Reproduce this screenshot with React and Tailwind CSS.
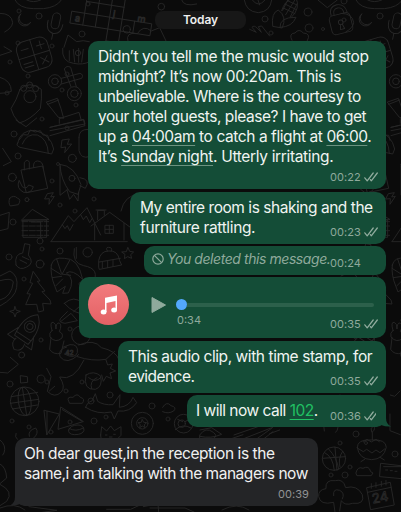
import React from "react";

/* Small line drawings of the chat wallpaper, on a grid three times finer than the page. */
function DoodleTop() {
  return (
    <g>
      <path d="M45 0Q58 25 100 26H130Q170 22 184 0M80 0q20 10 42 0" />
      <path d="M62 42a20 20 0 1 0 30 25a19 19 0 0 1-30-25Z" />
      <g transform="rotate(12 165 70)"><rect x="154" y="38" width="24" height="48" rx="12" /><path d="M143 65q-2 34 23 36q23-2 23-32M165 101v18" /></g>
      <g transform="rotate(9 230 50)">
        <path d="M214 36H456V72H214ZM252 -25V72M290 -25V72M328 -40V125M366 -40V125M404 36V72M252 0H366M328 108H366" />
        <text x="226" y="64">a</text><text x="336" y="34">j</text><text x="411" y="36">m</text>
      </g>
      <g transform="rotate(-17 103 165)"><rect x="55" y="117" width="96" height="94" rx="24" /><path d="M103 117v94M55 165h96M69 141h22M117 141h24M129 129v24M119 178l20 20M139 178l-20 20M65 183h28M65 194h28" /></g>
      <path d="M192 142L204 105L230 125Q250 119 268 125M188 145Q184 185 220 190Q250 196 268 185M208 152v30M220 148l4 38M236 145v42M250 148l-5 38" />
      <circle cx="234" cy="159" r="8" /><circle cx="165" cy="244" r="20" /><circle cx="165" cy="244" r="10" /><circle cx="223" cy="281" r="21" /><circle cx="223" cy="281" r="11" />
      <path d="M184 235L240 220Q252 224 245 235L184 252M213 260L193 207Q200 195 212 202L229 260" />
      <path d="M60 268Q50 300 33 326Q38 348 58 369Q90 360 121 326Q126 296 124 268Q88 240 60 268Z" /><ellipse cx="90" cy="290" rx="18" ry="18" /><circle cx="71" cy="265" r="9" /><circle cx="89" cy="255" r="9" /><circle cx="107" cy="266" r="9" />
      <path d="M140 306L172 295Q184 325 191 355L176 352ZM143 313L176 300M150 382L250 358L255 377L150 407M178 370v-14L237 337l7 24" />
      <path d="M0 232q34 10 34 42Q20 280 0 280M0 40q35 0 38 28Q36 84 14 96M12 140l24 14L0 166" />
      <path d="M384 125q-9-30 28-24q18-28 42-8l25-10l20 42M545 0q6 21 45 12" />
      <circle cx="380" cy="88" r="11" /><circle cx="484" cy="20" r="10" />
    </g>
  );
}

function DoodleMiddle() {
  return (
    <g>
      <path d="M53 69Q60 30 105 31Q153 44 161 87L155 102L60 82Q46 76 53 69ZM67 72Q80 39 112 45Q143 56 145 100M58 59l12-15l13 1l8-15l15 6l15-4l8 13l14 1l4 15" />
      <path d="M187 60L208 57L202 73L215 72L194 98L197 81L184 83ZM143 221L160 218L152 231L163 229L147 253L148 236L135 237Z" />
      <path d="M48 0L78 20L110-6M150 22L252-1L255 12L150 32" />
      <path d="M64 150L128 138L143 205L80 218ZM73 150V127q10-12 15 0V147M101 143q-3-20 12-20q16 0 17 22M57 182q-10 23 14 35q24 4 29-17l-14-5q-6 14-18 6Z" />
      <path d="M180 133Q224 137 243 194L234 223L209 215Q182 180 180 133ZM180 138v88l22-17M240 173q34 5 16 32l-16-8M201 210l8 28l12-15l13 20l2-25" /><circle cx="216" cy="175" r="9" />
      <path d="M29 235q12-12 24 0q12 3 2 19l-24 4q-7-9-2-23ZM65 300L97 268L146 298ZM70 300h70v52H70ZM94 306h28v46" /><path d="M66 305h80M66 318h80M66 332h80M66 346h80" strokeDasharray="18 4" />
      <path d="M153 365L205 287L222 305L261 263L302 345M187 314l8 12l7-9l7 15l10-18M242 284l8 15l9-11l10 20l7-12M153 365H382M273 318L329 277L391 322M284 313v47M372 310v50M293 299v-28h20v15M288 270h30M316 316h24v24h-24ZM328 316v24M316 328h24M363 273Q373 225 418 222" />
      <path d="M237 52Q236 28 264 28M237 52V92Q243 118 268 110M8 85L34 125L10 137M0 286L28 277L24 326L0 332" />
      <circle cx="81" cy="239" r="6" /><circle cx="37" cy="172" r="12" /><circle cx="217" cy="115" r="12" />
    </g>
  );
}

function DoodleLower() {
  return (
    <g>
      <path d="M48 75q-6-33 20-36l6-28l16 3l-5 31q20 25-5 36q-21 12-32-6M60 60l20 10M67 50l20 9" />
      <path d="M154 75q5-25 39-20q42-2 55 63Q217 86 199 99Q228 117 205 159L188 160L196 139L171 156L165 140Q150 105 154 75ZM170 57l14 42M209 61l-22 40M153 85l29 18M157 113l28-4M167 138l21-21M184 102l28 4" />
      <path d="M296 80V62Q301 33 326 33Q354 30 359 62L365 75L299 88ZM298 66L361 55M323 34q-8-11 2-12q14 0 9 11M307 65v19M323 62v21M339 59v21" />
      <path d="M100 95L120 123L112 124L135 153L126 155L150 180L153 192L128 190L131 212L115 216L110 193L77 194L91 162L81 161L98 130L91 128Z" />
      <path d="M182 245L213 220L232 242L195 250Q173 247 182 235L202 215M193 190q30-26 54 0l15 33q-39 1-69-33ZM221 215l27-24" />
      <g transform="rotate(34 83 270)"><path d="M83 215Q118 240 108 305H59Q49 240 83 215ZM57 275L40 314H65M109 275L126 313H104M68 310q-7 20 14 31q24-6 17-31M60 292h48" /><circle cx="83" cy="258" r="17" /><circle cx="83" cy="258" r="9" /></g>
      <path d="M45 200l4 11l12 3l-12 5l-4 12l-4-12l-12-5l12-3ZM384 23l5 11l12 2l-9 8l3 11l-12-5l-10 6l2-13l-10-7l13-1Z" />
      <path d="M156 271q-8-26 4-24q9 4 8 20q0-20 10-18q9 5 0 26q13 5 8 19q-19 17-36-3q-4-12 6-20ZM153 293l-4 35q10 17 34 12l9-37M188 322l22-8q26-2 22 24q-7 21-39 4M200 321q-27 7-20 29q20 27 56-6M236 315q47-20 68 8q45 10 53 36M232 350q45 15 86 8l26-24" /><circle cx="243" cy="286" r="28" /><text x="196" y="346" fontSize="20">42</text>
      <path d="M0 108l30-15q26 14 20 50Q46 173 0 198M0 122q35-10 40 4q-5 45-40 54M229 22L229 55M223 26q-8 44 28 51q53 9 26 56l13 20" />
      <circle cx="263" cy="37" r="14" /><circle cx="120" cy="72" r="12" /><circle cx="65" cy="345" r="9" />
    </g>
  );
}

function DoodleBottom() {
  return (
    <g>
      <circle cx="74" cy="124" r="43" /><ellipse cx="74" cy="124" rx="19" ry="43" transform="rotate(-8 74 124)" /><path d="M67 82l13 84M34 110l79-13M31 130l85-12M37 147l75-12" />
      <path d="M0 37l23 2L55 13L31-8M62 47l20 3l1 17l-20 2ZM140 25l13 25l-11 44q22 22 42 2q14-15-5-45q42 14 73-51M148 93l16-14M258 45q23-15 44 3q7 33-16 40q-38 3-28-43ZM266 53q20 17 36 0M275 86q-8-22 16-33" />
      <path d="M133 151l45 11l-37 62ZM141 154v68M182 142L174 208L249 185ZM187 149l58 34M206 210q5-15 28-15q18 0 18 16q-4 13-28 13q-21-1-18-14ZM207 205q20 12 43-1" />
      <path d="M206 124q-8-15 13-12q13-15 22 0q16 4 6 18h-37ZM257 142q5-16 19-19l10-22l7 23q18 12 46 10l21-30l-2 38q31-3 41-30l11 16Q389 158 354 153l-11 24l-9-21Q292 165 257 142ZM318 0l5 15l14-3l-6 13l16 8l-17 6l5 17l-16-7l-9 15l-5-19" />
      <circle cx="427" cy="190" r="33" /><circle cx="427" cy="190" r="17" /><path d="M427 179l4 8l9 1l-7 6l2 9l-8-5l-8 5l2-9l-7-6l9-1ZM302 225l3-25l15 13l12-15l11 14l20-12v26q-15 20-46 19q-16-4-15-20ZM316 225h5M341 223h5M328 231h8M321 247l-5 12" />
      <circle cx="551" cy="191" r="28" /><circle cx="545" cy="191" r="11" /><path d="M526 209q23-20 47-5M533 178l15 7M568 178l-13 7M88 229q-6-17 19-25q12 15-7 31M0 240q20 16 12 39L8 285M0 312q18 9 20 42L0 371M48 220q-5 11 4 18M0 373q43 22 20 51L0 437" />
      <path d="M87 440l84 11l-82 11M320 448h72l26-12M430 440l44-9l2 26M488 142q12-20 25-5q19 5 8 16q-16 10-33 2" />
      <g transform="translate(600 0)">
        <path d="M0 210l35-7l30 20q-32 14-65 6M102 225L203 190M116 242L218 202M80 241l49-17M147 253L215 205M165 257L219 215" />
        <circle cx="402" cy="296" r="35" /><path d="M374 278q25 11 29 53M385 266q27 28 31 61M368 295l68-5M405 261l6 70M428 274q-15 22-8 47M472 263q-1-26 43-23q43-3 44 22q-8 36-44 37q-38-1-43-36ZM475 266l15 9l10-7l16 11l12-9l12 8l14-11M517 239v-23q12-10 3-19q-11 9-5 19M494 298l-11 7M540 292l13 8M490 246l11-8l13 8l14-8l10 7" />
        <path d="M468 338q5-20 21-13q18-10 23 10l7 4l-5 8h-42ZM543 310l66 8l-5 38l-64-6ZM551 320h52M557 330h6M571 332h6M585 334h6" />
        <path d="M405 456l-4-29q-41 10-45-18q-1-20 22-23q-3-28 28-24q24-7 31 21q35-9 50 21q9 30-29 26q-24 8-34-8l-5 31M401 407q-3-23 18-16q17 8 8 26M501 383l70-16l12 68l-70 14ZM503 397l70-15M514 371v14M528 368v14M544 364v15M558 361v14" /><text x="515" y="428" fontSize="40" transform="rotate(-10 530 410)">24</text>
        <path d="M0 224q17-25 40-7q15 12 0 18H0ZM209 221l30-11M373 213q-6-26 16-36l18 7q14 20 0 33M382 188q10 14 27 1M380 0q7 30 1 49M600 93l-16 16l-13-4M365 165q50-8 55-60M570 162v50l31 12" />
      </g>
    </g>
  );
}

function Dots() {
  const spots = [[19, 11, 2], [39, 16, 3], [52, 46, 2], [18, 43, 2], [82, 34, 3], [88, 4, 2], [67, 74, 2], [28, 76, 2], [7, 93, 2], [62, 90, 2], [76, 105, 2], [10, 62, 2], [14, 134, 3], [42, 119, 2], [67, 128, 2], [18, 156, 3], [58, 164, 1.5], [52, 181, 2], [60, 205, 2], [75, 211, 2], [94, 199, 2], [13, 222, 3], [40, 241, 3], [9, 257, 3], [60, 251, 3], [42, 249, 2], [24, 279, 2], [81, 284, 2], [70, 329, 2], [41, 340, 2], [47, 382, 2], [10, 384, 3], [82, 382, 2], [41, 379, 4], [66, 391, 2], [110, 395, 3], [12, 421, 2], [94, 421, 3], [51, 432, 2], [106, 417, 2], [29, 427, 2], [91, 401, 3], [152, 406, 3], [168, 419, 2], [70, 422, 2], [331, 475, 2], [350, 467, 2], [356, 434, 3], [366, 443, 1.5], [340, 443, 2], [345, 475, 3], [395, 454, 3], [265, 19, 3], [308, 12, 4], [323, 29, 1.5], [380, 16, 3], [344, 20, 2], [344, 1, 3], [271, 33, 2], [309, 28, 4]];
  return spots.map(([x, y, r]) => <circle key={`${x}-${y}`} cx={x} cy={y} r={r} strokeWidth=".8" />);
}

function Wallpaper() {
  return (
    <svg className="absolute inset-0 h-[512px] w-[401px]" viewBox="0 0 401 512" fill="none" stroke="#272727" strokeWidth="2.8" strokeLinecap="round" strokeLinejoin="round" fontFamily="Inter, sans-serif" fontSize="28" aria-hidden="true">
      <defs>
        <g id="tile">
          <g transform="scale(.3333)"><DoodleTop /></g>
          <g transform="translate(0 120) scale(.3333)"><DoodleMiddle /></g>
          <g transform="translate(0 240) scale(.3333)"><DoodleLower /></g>
        </g>
      </defs>
      <use href="#tile" />
      <use href="#tile" x="341" />
      <g transform="translate(0 360) scale(.3333)"><DoodleBottom /></g>
      <g transform="translate(200 0) scale(.3333)">
        <path d="M133 0q5 35 42 38q36-3 40-38M157 0q18 25 38 0M174 0l5 15" />
        <path d="M218 78q-5-40 17-48q27 20 12 53ZM240 82q-2-31 48-30q-11 29-48 30ZM245 32q8-31 42-42q16 36-13 62M250 24l35 17M255 12l32 16M262 2l27 12M257 44l27-43M248 31l17-34M271 50l20-38" />
        <g transform="rotate(-14 422 66)"><rect x="390" y="42" width="64" height="58" rx="12" /><path d="M399 41q-2-28 24-28q24 2 25 28M408 41q-1-18 15-18q15 1 15 18M420 73l-4 15h13l-4-15" /><circle cx="422" cy="67" r="7" /></g>
        <path d="M354 0l28 23l30-23M149 88l20 9l-13-15q6-8 16 3l12 12l-9-17l10-2l24 30M276 121q-11-21 9-22q12-15 25 0q24 1 12 23" />
      </g>
      <Dots />
      <path d="M0 508q15-6 25 2M150 508h35l9 4M222 510q15-8 27 0" strokeWidth=".9" />
    </svg>
  );
}

function Ticks() {
  return (
    <svg className="h-[10px] w-[14px] shrink-0" viewBox="0 0 14 10" fill="none" stroke="#91ac9e" strokeWidth="1.25" strokeLinecap="round" strokeLinejoin="round">
      <path d="M.8 5.8L3.2 8.8L9.2 1M6.4 7.6L7.3 8.8L13.3 1" />
    </svg>
  );
}

function Stamp({ time, ticks = true, className = "" }) {
  return (
    <div className={`flex h-[12px] shrink-0 items-center gap-[3px] text-[11px] leading-[12px] tracking-[0.05px] ${className}`}>
      <span>{time}</span>
      {ticks && <Ticks />}
    </div>
  );
}

function Sent({ className = "", children }) {
  return <div className={`relative ml-auto mr-[15px] rounded-[10px] bg-[#144d37] ${className}`}>{children}</div>;
}

function Detected({ children }) {
  return <span className="underline decoration-[#6c9280] decoration-1 underline-offset-[3px] [text-decoration-skip-ink:none]">{children}</span>;
}

export default function App() {
  return (
    <main className="relative h-[512px] w-[401px] overflow-hidden bg-[#0b0b0b] font-['Inter','Liberation_Sans',sans-serif] text-[15.5px] leading-[20px] text-[#f0f4f1]">
      <Wallpaper />
      <div className="relative flex flex-col pt-[11px]">
        <div className="ml-[155px] h-[18px] w-[91px] rounded-[8px] bg-[#171717] text-center text-[12px] font-semibold leading-[18px] tracking-[-0.1px] text-[#eeeeee]">Today</div>

        <Sent className="mt-[12px] h-[147.5px] w-[298px] whitespace-nowrap pl-[10px] pt-[6px]">
          <p className="tracking-[-0.42px]">Didn’t you tell me the music would stop</p>
          <p className="tracking-[-0.42px]">midnight? It’s now 00:20am. This is</p>
          <p className="tracking-[-0.47px]">unbelievable. Where is the courtesy to</p>
          <p className="tracking-[-0.45px]">your hotel guests, please? I have to get</p>
          <p className="tracking-[-0.42px]">up a <Detected>04:00am</Detected> to catch a flight at <Detected>06:00</Detected>.</p>
          <p className="tracking-[-0.34px]">It’s <Detected>Sunday night</Detected>. Utterly irritating.</p>
          <Stamp time="00:22" className="ml-[232px] mt-[4px] text-[#8faa9c]" />
        </Sent>

        <Sent className="mt-[3px] h-[52px] w-[256px] whitespace-nowrap pl-[10px] pt-[6px]">
          <p className="tracking-[-0.46px]">My entire room is shaking and the</p>
          <div className="flex">
            <p className="w-[190px] tracking-[-0.36px]">furniture rattling.</p>
            <Stamp time="00:23" className="mt-[8px] text-[#8faa9c]" />
          </div>
        </Sent>

        <Sent className="mt-[2.5px] flex h-[28.5px] w-[242px] whitespace-nowrap pl-[8px] pt-[6px] text-[#8faa9c]">
          <svg className="mt-px h-[12px] w-[12px]" viewBox="0 0 12 12" fill="none" stroke="currentColor" strokeWidth="1.2"><circle cx="6" cy="6" r="5.2" /><path d="M2.4 2.4L9.6 9.6" /></svg>
          <p className="ml-[3px] w-[163px] text-[14px] italic leading-[14px] tracking-[-0.43px]">You deleted this message.</p>
          <Stamp time="00:24" ticks={false} className="mt-[5px]" />
        </Sent>

        <Sent className="mt-[2.5px] flex h-[61px] w-[307px] pl-[9px]">
          <div className="mt-[7px] flex h-[41px] w-[41px] items-center justify-center rounded-full bg-gradient-to-b from-[#f27b7d] to-[#e36165]">
            <svg className="h-[20px] w-[18px]" viewBox="0 0 18 20" fill="#fff"><path d="M5 2.8L17 .4V15.2H15.5V6.1L6.5 7.9V17H5Z" /><ellipse cx="3.6" cy="17" rx="2.9" ry="2.5" /><ellipse cx="14.1" cy="15" rx="2.9" ry="2.5" /></svg>
          </div>
          <svg className="ml-[22px] mt-[20px] h-[16px] w-[15px]" viewBox="0 0 15 16" fill="#8faa9c"><path d="M1 .5L14.5 8L1 15.5Z" stroke="#8faa9c" strokeLinejoin="round" /></svg>
          <div className="ml-[10px] mt-[22px] w-[198px]">
            <div className="flex h-[11px] items-center">
              <span className="h-[11px] w-[11px] rounded-full bg-[#53a8fb]" />
              <span className="h-[4px] w-[187px] rounded-r-full bg-[#2c604b]" />
            </div>
            <div className="flex text-[11px] text-[#8faa9c]">
              <span className="w-[154px] shrink-0 pl-px leading-[21px]">0:34</span>
              <Stamp time="00:35" className="mt-[8px]" />
            </div>
          </div>
        </Sent>

        <Sent className="mt-[3px] h-[51.5px] w-[268px] whitespace-nowrap pl-[10px] pt-[6px]">
          <p className="tracking-[-0.43px]">This audio clip, with time stamp, for</p>
          <div className="flex">
            <p className="w-[202px] tracking-[-0.55px]">evidence.</p>
            <Stamp time="00:35" className="mt-[8px] text-[#8faa9c]" />
          </div>
        </Sent>

        <Sent className="mt-[2.5px] flex h-[32px] w-[199px] whitespace-nowrap pl-[9px] pt-[6px]">
          <p className="w-[134px] tracking-[-0.5px]">I will now call <span className="text-[#21c063] underline decoration-1 underline-offset-[3px]">102</span>.</p>
          <Stamp time="00:36" className="mt-[9px] text-[#8faa9c]" />
          <svg className="absolute bottom-0 right-[-5px] h-[18px] w-[15px]" viewBox="0 0 15 18" fill="#144d37"><path d="M0 0H10V9Q10 15 15 17.5Q10 18 5 16L0 18Z" /></svg>
        </Sent>

        <div className="relative ml-[15px] mt-[10.5px] h-[68px] w-[303px] whitespace-nowrap rounded-[10px] bg-[#242527] pl-[9px] pt-[6px] text-[#f0f0f0]">
          <p className="tracking-[-0.43px]">Oh dear guest,in the reception is the</p>
          <p className="tracking-[-0.47px]">same,i am talking with the managers now</p>
          <Stamp time="00:39" ticks={false} className="ml-[254px] mt-[4px] text-[#929394]" />
          <svg className="absolute bottom-0 left-[-5px] h-[18px] w-[15px]" viewBox="0 0 15 18" fill="#242527"><path d="M15 0H5V9Q5 15 0 17.5Q5 18 10 16L15 18Z" /></svg>
        </div>
      </div>
    </main>
  );
}
